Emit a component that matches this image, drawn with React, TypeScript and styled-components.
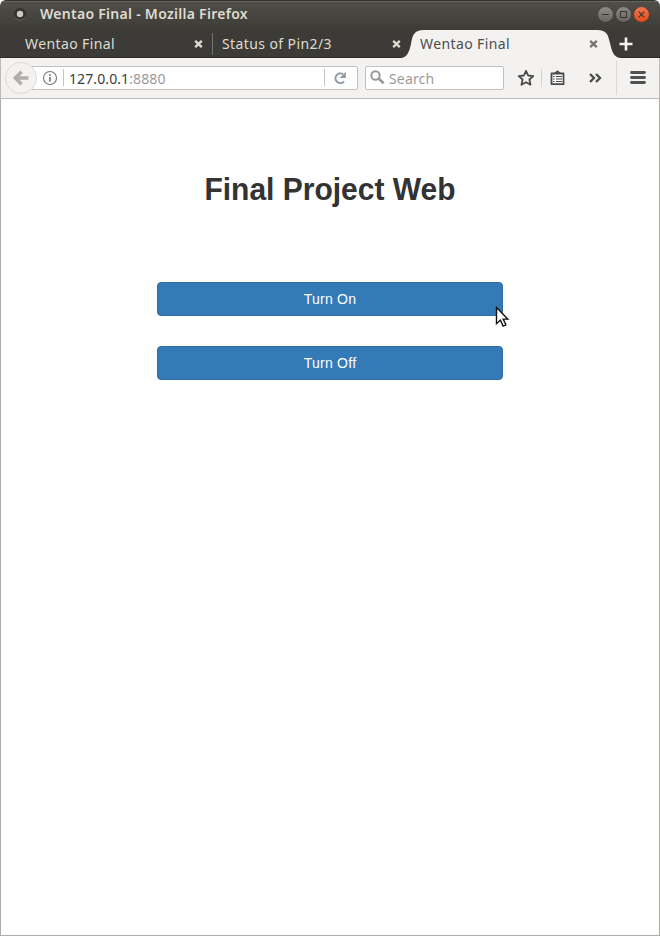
import React from "react";
import styled, { createGlobalStyle } from "styled-components";

const Global = createGlobalStyle`
  *, *::before, *::after { box-sizing: border-box; }
  body { margin: 0; background: #fff; }
  button { font: inherit; }
`;

const BrowserWindow = styled.div`
  position: relative;
  width: 660px;
  height: 936px;
  display: flex;
  flex-direction: column;
  overflow: hidden;
  background: #fff;
  border-radius: 6px 6px 0 0;
  font-family: "Noto Sans", "Open Sans", sans-serif;
  font-size: 14px;
`;

const TitleBar = styled.header`
  height: 30px;
  flex: none;
  display: flex;
  align-items: center;
  padding: 0 10px 3px 13px;
  border-top: 1px solid #33322e;
  box-shadow: inset 0 1px #64625c;
  background: linear-gradient(#504f49, #3e3d38 90%);
`;

const Title = styled.span`
  flex: 1;
  margin-left: 13px;
  color: #dfdbd2;
  font-weight: 600;
  line-height: 26px;
  white-space: nowrap;
  letter-spacing: 0.28px;
`;

const WindowControls = styled.div`
  display: flex;
  gap: 1px;
  margin-top: 1px;
`;

const TabStrip = styled.nav`
  height: 28px;
  flex: none;
  display: flex;
  background: #3c3b37;
  box-shadow: inset 0 -1px #2b2a27;
`;

const Tab = styled.div<{ $width: number; $left: number; $active?: boolean; $divided?: boolean }>`
  position: relative;
  width: ${(p) => p.$width}px;
  flex: none;
  display: flex;
  align-items: center;
  margin-left: ${(p) => (p.$active ? -11 : 0)}px;
  padding: 0 ${(p) => (p.$active ? 24 : 10)}px 0 ${(p) => p.$left}px;
  color: ${(p) => (p.$active ? "#4c4c4c" : "#dfdbd2")};
  &::after {
    content: "";
    display: ${(p) => (p.$divided ? "block" : "none")};
    position: absolute;
    right: 0;
    top: 3px;
    width: 1px;
    height: 22px;
    background: #777570;
  }
`;

const TabShape = styled.svg`
  position: absolute;
  inset: 0;
`;

const TabLabel = styled.span`
  position: relative;
  flex: 1;
  line-height: 28px;
  white-space: nowrap;
  letter-spacing: 0.4px;
`;

const Glyph = styled.svg`
  display: block;
  flex: none;
  position: relative;
`;

const NewTab = styled.div`
  padding: 7px 0 0 0;
  margin-left: -3px;
`;

const Toolbar = styled.div`
  height: 41px;
  flex: none;
  display: flex;
  align-items: center;
  padding: 0 0 1px 4px;
  background: #f3f2f1;
  border: solid #bdbbb8;
  border-width: 0 1px 1px;
`;

const BackButton = styled.div`
  position: relative;
  z-index: 1;
  width: 32px;
  height: 32px;
  flex: none;
  display: grid;
  place-items: center;
  border: 1px solid #dcdad8;
  border-radius: 50%;
  background: #f3f2f1;
`;

const Field = styled.div<{ $width: number; $address?: boolean }>`
  width: ${(p) => p.$width}px;
  height: 24px;
  flex: none;
  display: flex;
  align-items: center;
  margin-left: ${(p) => (p.$address ? -8 : 7)}px;
  padding-left: ${(p) => (p.$address ? 12 : 4)}px;
  border: 1px solid #c3c1bf;
  border-radius: 2px;
  background: #fff;
  white-space: nowrap;
`;

const Divider = styled.i<{ $height: number; $margin: string; $color?: string }>`
  width: 1px;
  height: ${(p) => p.$height}px;
  flex: none;
  margin: ${(p) => p.$margin};
  background: ${(p) => p.$color ?? "#c6c6c6"};
`;

const Address = styled.span`
  flex: 1;
  padding-top: 2px;
  color: #9a9a9a;
  line-height: 22px;
  letter-spacing: 0.1px;
`;

const Host = styled.span`
  color: #3c3c3c;
`;

const Placeholder = styled.span`
  margin-left: 4px;
  padding-top: 2px;
  color: #9a9a9a;
  line-height: 22px;
  letter-spacing: 0.15px;
`;

const Actions = styled.div`
  flex: 1;
  display: flex;
  align-items: center;
  padding-left: 13px;
`;

const Page = styled.main`
  flex: 1;
  display: flex;
  flex-direction: column;
  align-items: center;
  border: 1px solid #aeaca8;
  border-top: 0;
  font-family: "Liberation Sans", Arial, sans-serif;
`;

const Heading = styled.h2`
  margin: 71px 0 75px;
  color: #333;
  font-size: 30px;
  font-weight: 700;
  line-height: 37px;
  transform: translateY(0.5px) scaleY(1.07);
`;

const ActionButton = styled.button`
  width: 346px;
  height: 34px;
  margin-bottom: 30px;
  padding: 0;
  border: 1px solid #2e6da4;
  border-radius: 4px;
  background: #337ab7;
  color: #fff;
  font-size: 14px;
  letter-spacing: 0.25px;
`;

const ButtonLabel = styled.span`
  display: inline-block;
  transform: scaleY(1.08);
`;

const Cursor = styled.svg`
  position: absolute;
  left: 495px;
  top: 306px;
`;

const CloseGlyph = ({ color }: { color: string }) => (
  <Glyph width="9" height="8" viewBox="0 0 9 8">
    <path d="M1.2 .8 7.8 7.2M7.8 .8 1.2 7.2" stroke={color} strokeWidth="2.3" />
  </Glyph>
);

const ControlGlyph = ({ kind }: { kind: "min" | "max" | "close" }) => (
  <Glyph width="17" height="17" viewBox="0 0 17 17">
    <defs>
      <linearGradient id={`control-${kind}`} x2="0" y2="1">
        <stop stopColor={kind === "close" ? "#f5784f" : "#8d8b83"} />
        <stop offset="1" stopColor={kind === "close" ? "#df4b1c" : "#66645d"} />
      </linearGradient>
    </defs>
    <circle cx="8.5" cy="8.5" r="7.9" fill={`url(#control-${kind})`} stroke="#33322e" strokeWidth=".6" />
    <g fill="none" stroke="#383631" strokeWidth="1.1">
      {kind === "min" && <path d="M5 8.5h7" />}
      {kind === "max" && <rect x="5.5" y="5.5" width="6" height="6" />}
      {kind === "close" && <path d="m5.7 5.7 5.6 5.6m0-5.6-5.6 5.6" />}
    </g>
  </Glyph>
);

export default function App() {
  return (
    <>
      <Global />
      <BrowserWindow>
        <TitleBar>
          <Glyph width="14" height="14" viewBox="0 0 14 14">
            <circle cx="7" cy="7" r="6" fill="#34332f" />
            <path d="M2 10.5a6 6 0 0 0 10 0" fill="none" stroke="#66645e" />
            <circle cx="7" cy="7" r="3.2" fill="#cbc8c0" />
          </Glyph>
          <Title>Wentao Final - Mozilla Firefox</Title>
          <WindowControls>
            <ControlGlyph kind="min" />
            <ControlGlyph kind="max" />
            <ControlGlyph kind="close" />
          </WindowControls>
        </TitleBar>

        <TabStrip>
          <Tab $width={213} $left={25} $divided>
            <TabLabel>Wentao Final</TabLabel>
            <CloseGlyph color="#dfdbd2" />
          </Tab>
          <Tab $width={198} $left={9}>
            <TabLabel>Status of Pin2/3</TabLabel>
            <CloseGlyph color="#dfdbd2" />
          </Tab>
          <Tab $width={222} $left={20} $active>
            <TabShape width="222" height="28" viewBox="0 0 222 28">
              <path
                d="M0 28C8 28 9.500 20 11 14C12.500 5 14 0 24 0H197C207 0 208 5 210 13C212 21 213 28 222 28Z"
                fill="#f3f2f1"
              />
            </TabShape>
            <TabLabel>Wentao Final</TabLabel>
            <CloseGlyph color="#777572" />
          </Tab>
          <NewTab>
            <Glyph width="14" height="14" viewBox="0 0 14 14">
              <path d="M7 .5v13M.5 7h13" stroke="#f5f4f1" strokeWidth="2.6" />
            </Glyph>
          </NewTab>
        </TabStrip>

        <Toolbar>
          <BackButton>
            <Glyph width="16" height="16" viewBox="0 0 14 14">
              <path d="M13.500 7H2M7.500 1.500 2 7l5.500 5.500" fill="none" stroke="#b0afae" strokeWidth="3" />
            </Glyph>
          </BackButton>
          <Field $width={329} $address>
            <Glyph width="16" height="16" viewBox="0 0 16 16">
              <circle cx="8" cy="8" r="6.500" fill="none" stroke="#777" strokeWidth="1.100" />
              <path d="M8 7v4.700M8 4.200v1.700" stroke="#777" strokeWidth="1.700" />
            </Glyph>
            <Divider $height={17} $margin="0 5px 0 5px" />
            <Address>
              <Host>127.0.0.1</Host>:8880
            </Address>
            <Divider $height={17} $margin="0 8px 0 0" />
            <Glyph width="14" height="14" viewBox="0 0 14 14">
              <path d="M11 10.300A4.800 4.800 0 1 1 9.900 3.200" fill="none" stroke="#8e99a5" strokeWidth="2" />
              <path d="M12.800 .8v6.200H6.600Z" fill="#8e99a5" />
            </Glyph>
            <Divider $height={0} $margin="0 9px 0 0" />
          </Field>
          <Field $width={139}>
            <Glyph width="15" height="15" viewBox="0 0 15 15">
              <circle cx="5.500" cy="5.500" r="4.200" fill="none" stroke="#999" strokeWidth="2" />
              <path d="m8.500 8.500 5.200 4.700" stroke="#999" strokeWidth="2.600" />
            </Glyph>
            <Placeholder>Search</Placeholder>
          </Field>
          <Actions>
            <Glyph width="18" height="18" viewBox="0 0 18 18">
              <path
                d="m9 1.800 2.100 4.700 5.200.6-3.900 3.400 1.100 5.200L9 13.200l-4.500 2.500 1.100-5.200L1.700 7.100l5.200-.6Z"
                fill="none"
                stroke="#4a4a4a"
                strokeWidth="1.800"
                strokeLinejoin="round"
              />
            </Glyph>
            <Divider $height={18} $margin="0 8px 0 6px" $color="#d5d3d1" />
            <Glyph width="15" height="16" viewBox="0 0 15 16">
              <path d="M1.500 3.500h12v10.700h-12Z" fill="#fafafa" stroke="#4a4a4a" strokeWidth="1.800" strokeLinejoin="round" />
              <path d="M3.500 3.500 7.500.3l4 3.200Z" fill="#4a4a4a" />
              <path d="M3 6.500H4.500M6 6.500h6M3 9H4.500M6 9h6M3 11.500H4.500M6 11.500h6" stroke="#4a4a4a" strokeWidth="1" />
            </Glyph>
            <Divider $height={0} $margin="0 23px 0 0" />
            <Glyph width="13" height="10" viewBox="0 0 13 10">
              <path d="m1 1 4 4-4 4m6-8 4 4-4 4" fill="none" stroke="#4a4a4a" strokeWidth="2.3" />
            </Glyph>
            <Divider $height={34} $margin="0 13px 0 14px" $color="#dbd9d7" />
            <Glyph width="16" height="13" viewBox="0 0 16 13">
              <path d="M1.500 1.500h13m-13 5h13m-13 5h13" stroke="#505252" strokeWidth="2.800" strokeLinecap="round" />
            </Glyph>
          </Actions>
        </Toolbar>

        <Page>
          <Heading>Final Project Web</Heading>
          <ActionButton>
            <ButtonLabel>Turn On</ButtonLabel>
          </ActionButton>
          <ActionButton>
            <ButtonLabel>Turn Off</ButtonLabel>
          </ActionButton>
        </Page>

        <Cursor width="15" height="23" viewBox="0 0 15 23">
          <path
            d="M1.500 1.500v16.200l3.900-3.600 2.700 6 2.800-1.300-2.700-5.700h4.600Z"
            fill="#fff"
            stroke="#111"
            strokeWidth="1.400"
          />
        </Cursor>
      </BrowserWindow>
    </>
  );
}
